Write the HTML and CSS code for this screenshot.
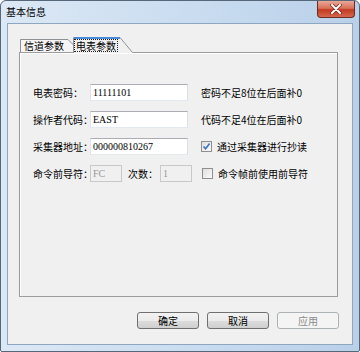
FILE: index.html
```html
<!DOCTYPE html>
<html lang="zh-CN">
<head>
    <meta charset="UTF-8">
    <title>基本信息</title>
    <link rel="stylesheet" href="styles.css">
</head>
<body>
    <div class="window">
        <div class="titlebar">
            <span class="title">基本信息</span>
            <div class="close">
                <svg width="12" height="10" viewBox="0 0 12 10">
                    <path d="M2 1L10 9M10 1L2 9" stroke="#7a2a1c" stroke-width="3.6" stroke-linecap="round"/>
                    <path d="M2 1L10 9M10 1L2 9" stroke="#fff" stroke-width="2" stroke-linecap="round"/>
                </svg>
            </div>
        </div>
        <div class="client">
            <div class="tabs">
                <div class="tab">
                    <svg class="tab-shape" width="62" height="13" viewBox="0 0 62 13">
                        <path d="M0.5 13V0.5H48L60.5 13" fill="#f5f5f5" stroke="#8e9193"/>
                    </svg>
                    <span class="tab-label">信道参数</span>
                </div>
                <div class="tab tab-active">
                    <svg class="tab-shape" width="61" height="16" viewBox="0 0 61 16">
                        <path d="M0.5 16V0.5H47L59.5 15V16Z" fill="#f0f0f0"/>
                        <path d="M0.5 16V0.5H47L59.5 15.5" fill="none" stroke="#8e9193"/>
                        <rect x="1" y="0" width="46" height="2" fill="#4a8ad6"/>
                    </svg>
                    <span class="tab-label">电表参数</span>
                </div>
            </div>
            <div class="panel">
                <div class="row">
                    <span class="label">电表密码：</span>
                    <input class="field field-wide" type="text" value="11111101">
                    <span class="hint">密码不足8位在后面补0</span>
                </div>
                <div class="row">
                    <span class="label">操作者代码：</span>
                    <input class="field field-wide" type="text" value="EAST">
                    <span class="hint">代码不足4位在后面补0</span>
                </div>
                <div class="row">
                    <span class="label">采集器地址：</span>
                    <input class="field field-wide" type="text" value="000000810267">
                    <span class="check">
                        <span class="box">
                            <svg width="9" height="9" viewBox="0 0 9 9">
                                <path d="M1.5 4.5L3.6 6.8L7.6 1.6" fill="none" stroke="#3a74c6" stroke-width="1.6"/>
                            </svg>
                        </span>
                        通过采集器进行抄读
                    </span>
                </div>
                <div class="row">
                    <span class="label">命令前导符：</span>
                    <input class="field field-small" type="text" value="FC" disabled>
                    <span class="count-label">次数：</span>
                    <input class="field field-small" type="text" value="1" disabled>
                    <span class="check check-last">
                        <span class="box"></span>
                        命令帧前使用前导符
                    </span>
                </div>
            </div>
            <div class="buttons">
                <button class="btn">确定</button>
                <button class="btn">取消</button>
                <button class="btn" disabled>应用</button>
            </div>
        </div>
    </div>
</body>
</html>
```

FILE: styles.css
```css
body {
    margin: 0;
    font-family: "Noto Sans CJK SC", "Noto Sans", sans-serif;
    font-size: 10px;
    color: #000;
    background-color: #fff;
}
.window {
    width: 360px;
    height: 352px;
    box-sizing: border-box;
    border: 1px solid #56677a;
    border-radius: 6px 6px 2px 2px;
    background: linear-gradient(90deg, #dce8f5 0%, #c9dcf0 55%, #b9d0e9 100%);
    display: flex;
    flex-direction: column;
}
.titlebar {
    height: 22px;
    display: flex;
    align-items: flex-start;
}
.title {
    margin: 5px 0 0 5px;
    line-height: 12px;
}
.close {
    margin-left: auto;
    margin-right: 4px;
    width: 38px;
    height: 17px;
    box-sizing: border-box;
    border: 1px solid #6e2b20;
    border-top: none;
    border-radius: 0 0 4px 4px;
    background: linear-gradient(#e9a898 0%, #d8725b 45%, #c23a20 55%, #d5684e 100%);
    display: flex;
    align-items: center;
    justify-content: center;
}
.client {
    margin: 0 6px 6px;
    height: 322px;
    box-sizing: border-box;
    border: 1px solid #8fa6c0;
    background-color: #f0f0f0;
    padding: 13px 0 0 11px;
}
.tabs {
    display: flex;
    align-items: flex-end;
    height: 15px;
    margin-left: 1px;
}
.tab {
    position: relative;
    width: 53px;
    height: 13px;
}
.tab-active {
    width: 60px;
    height: 16px;
    margin-bottom: -1px;
    z-index: 1;
}
.tab-shape {
    position: absolute;
    left: 0;
    top: 0;
}
.tab-label {
    position: relative;
    display: block;
    padding-left: 4px;
    line-height: 13px;
}
.tab-active .tab-label {
    width: fit-content;
    margin: 2px 0 0 1px;
    padding: 0 1px;
    border: 1px dotted #222;
    line-height: 11px;
}
.panel {
    width: 319px;
    height: 245px;
    box-sizing: border-box;
    border: 1px solid #9c9c9c;
    box-shadow: inset 1px 1px 0 #fff;
    padding: 31px 0 0 13px;
    display: flex;
    flex-direction: column;
    gap: 10px;
}
.row {
    display: flex;
    align-items: center;
    height: 17px;
    white-space: nowrap;
}
.label {
    width: 57px;
}
.field {
    box-sizing: border-box;
    height: 17px;
    margin: 0;
    padding: 0 2px;
    border: 1px solid;
    border-color: #abadb3 #dbdfe6 #e3e9ef #e2e3ea;
    background-color: #fff;
    font-family: "Liberation Serif", serif;
    font-size: 10px;
    color: #000;
    outline: none;
}
.field:disabled {
    background-color: #f0f0f0;
    border-color: #c9c9c9;
    color: #9a9a9a;
}
.field-wide {
    width: 98px;
}
.field-small {
    width: 32px;
}
.hint {
    margin-left: 13px;
}
.count-label {
    margin-left: 6px;
    width: 32px;
}
.check {
    margin-left: 13px;
    display: flex;
    align-items: center;
    gap: 5px;
}
.check-last {
    margin-left: 10px;
}
.box {
    width: 11px;
    height: 11px;
    box-sizing: border-box;
    border: 1px solid #8f8f8f;
    background: linear-gradient(135deg, #dedede, #fbfbfb);
    display: flex;
    align-items: center;
    justify-content: center;
}
.buttons {
    width: 320px;
    margin-top: 15px;
    display: flex;
    justify-content: flex-end;
    gap: 8px;
}
.btn {
    width: 62px;
    height: 17px;
    padding: 0;
    border: 1px solid #707070;
    border-radius: 3px;
    background: linear-gradient(#f2f2f2 0%, #ebebeb 50%, #dddddd 51%, #cfcfcf 100%);
    font-family: "Noto Sans CJK SC", sans-serif;
    font-size: 10px;
    line-height: 15px;
    color: #000;
}
.btn:disabled {
    border-color: #adb2b5;
    background: #f4f4f4;
    color: #8c8c8c;
}
```
